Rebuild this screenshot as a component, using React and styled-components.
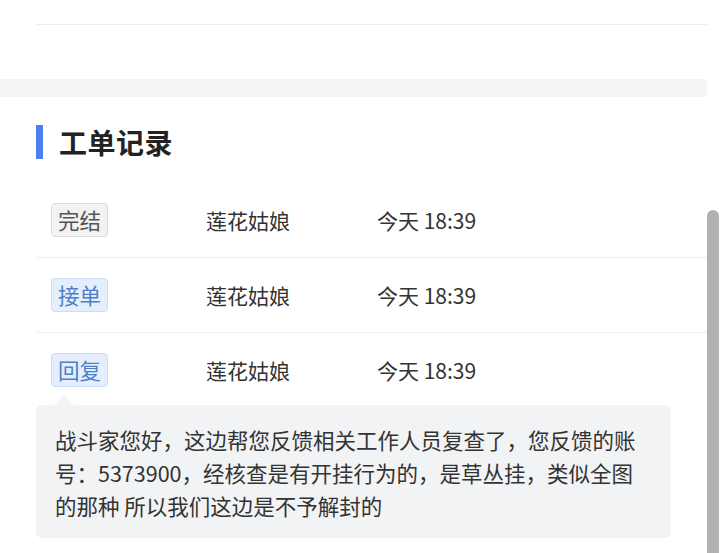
import React from 'react';
import styled, { createGlobalStyle, css } from 'styled-components';

const GlobalStyle = createGlobalStyle`
  html, body {
    margin: 0;
    padding: 0;
    background: #fff;
  }
  body {
    font-family: "Noto Sans CJK SC", "Noto Sans", sans-serif;
    color: #333;
  }
`;

const Page = styled.div`
  display: flex;
  width: 720px;
  height: 553px;
  overflow: hidden;
`;

const Main = styled.div`
  width: 707px;
  flex-shrink: 0;
`;

const TopStrip = styled.div`
  height: 79px;
  padding-left: 36px;
  box-sizing: border-box;
`;

const TopRule = styled.div`
  height: 24px;
  border-bottom: 1px solid #ededed;
`;

const Band = styled.div`
  height: 18px;
  background: #f4f5f7;
`;

const Section = styled.section`
  padding-left: 36px;
`;

const Heading = styled.h2`
  margin: 28px 0 0;
  height: 34px;
  display: flex;
  align-items: center;
  gap: 16px;
  font-size: 28px;
  font-weight: 700;
  color: #222;
  letter-spacing: 0.5px;

  &::before {
    content: "";
    width: 7px;
    height: 34px;
    background: #4d7ff0;
  }
`;

const RecordList = styled.div`
  margin-top: 24px;
`;

const Row = styled.div`
  display: flex;
  align-items: center;
  padding: 20px 0;
  border-bottom: 1px solid #eeeeee;
  font-size: 21px;
  color: #333;

  &:last-child {
    border-bottom: none;
    padding-bottom: 0;
  }
`;

const TagCell = styled.div`
  width: 170px;
  padding-left: 15px;
  box-sizing: border-box;
  display: flex;
`;

const tagTones = {
  gray: css`
    background: #f2f2f2;
    border-color: #dcdcdc;
    color: #555;
  `,
  blue: css`
    background: #e4eefc;
    border-color: #cadcf6;
    color: #4c80c9;
  `,
};

const Tag = styled.span`
  display: inline-block;
  height: 34px;
  box-sizing: border-box;
  line-height: 31px;
  padding: 0 6px;
  border: 1px solid;
  border-radius: 4px;
  font-size: 21.5px;
  ${({ tone }) => tagTones[tone]}
`;

const NameCell = styled.div`
  width: 171px;
`;

const TimeCell = styled.div`
  flex: 1;
`;

const Reply = styled.div`
  position: relative;
  margin: 18px 36px 0 0;
  padding: 18px 19px 16px;
  background: #f2f3f5;
  border-radius: 6px;
  font-size: 21.5px;
  line-height: 33px;
  color: #333;

  &::before {
    content: "";
    position: absolute;
    top: -10px;
    left: 18px;
    border-left: 10px solid transparent;
    border-right: 10px solid transparent;
    border-bottom: 10px solid #f2f3f5;
  }
`;

const Track = styled.div`
  flex: 1;
  display: flex;
  flex-direction: column;
  padding-top: 210px;
`;

const Thumb = styled.div`
  flex: 1;
  width: 12px;
  background: #b1b1b1;
  border-radius: 6px 6px 0 0;
`;

const records = [
  { status: '完结', tone: 'gray', user: '莲花姑娘', time: '今天 18:39' },
  { status: '接单', tone: 'blue', user: '莲花姑娘', time: '今天 18:39' },
  { status: '回复', tone: 'blue', user: '莲花姑娘', time: '今天 18:39' },
];

const replyText =
  '战斗家您好，这边帮您反馈相关工作人员复查了，您反馈的账号：5373900，经核查是有开挂行为的，是草丛挂，类似全图的那种 所以我们这边是不予解封的';

export default function App() {
  return (
    <>
      <GlobalStyle />
      <Page>
        <Main>
          <TopStrip>
            <TopRule />
          </TopStrip>
          <Band />
          <Section>
            <Heading>工单记录</Heading>
            <RecordList>
              {records.map((r, i) => (
                <Row key={i}>
                  <TagCell>
                    <Tag tone={r.tone}>{r.status}</Tag>
                  </TagCell>
                  <NameCell>{r.user}</NameCell>
                  <TimeCell>{r.time}</TimeCell>
                </Row>
              ))}
            </RecordList>
            <Reply>{replyText}</Reply>
          </Section>
        </Main>
        <Track>
          <Thumb />
        </Track>
      </Page>
    </>
  );
}
